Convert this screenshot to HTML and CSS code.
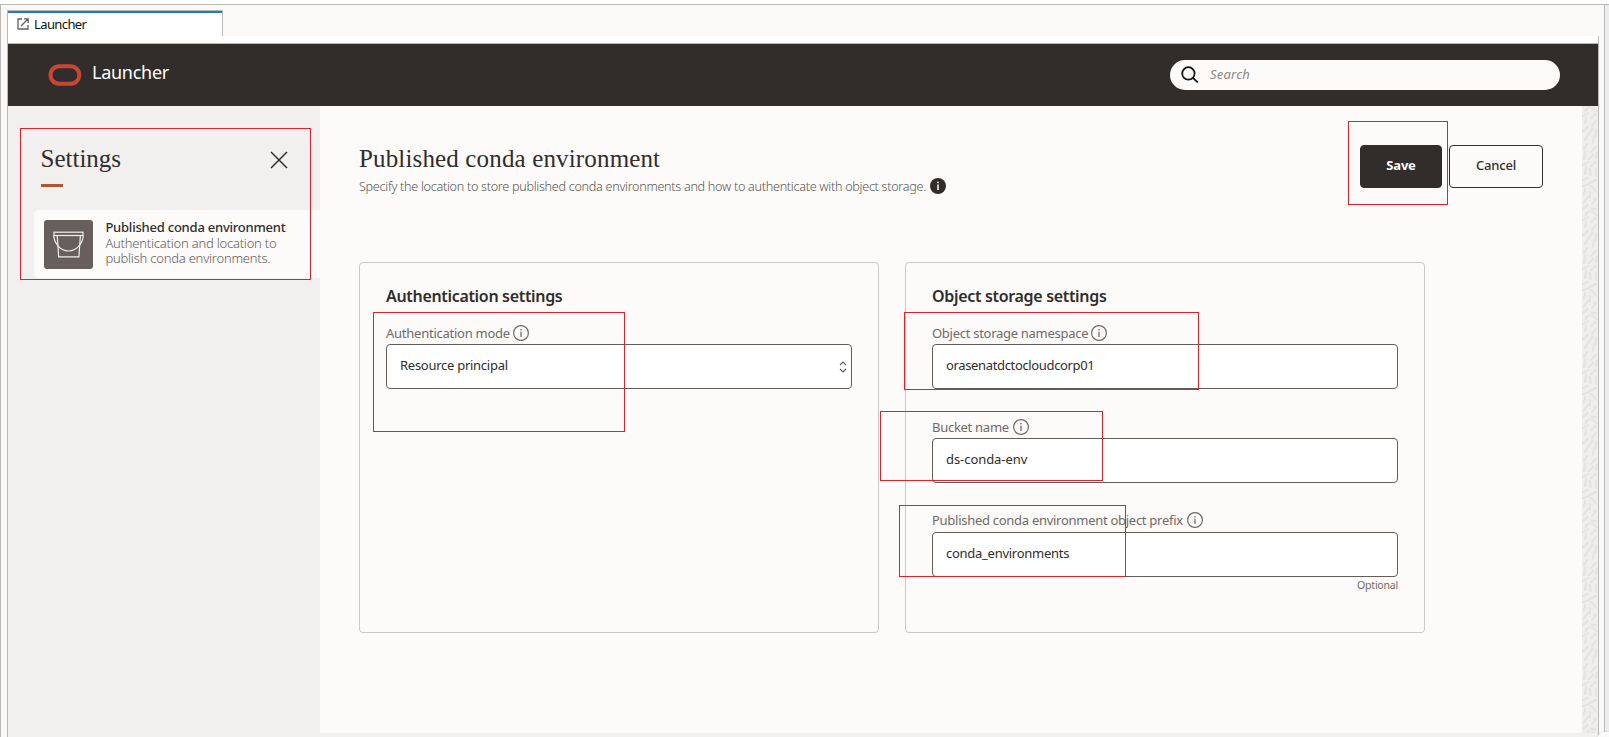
FILE: index.html
```html
<!DOCTYPE html>
<html lang="en">
<head>
<meta charset="utf-8">
<title>Launcher</title>
<link rel="stylesheet" href="styles.css">
</head>
<body>
<svg class="defs" width="0" height="0" aria-hidden="true">
  <symbol id="info" viewBox="0 0 16 16"><circle cx="8" cy="8" r="7.4" fill="none" stroke="currentColor" stroke-width="1.2"/><path d="M8 6.7V12M8 3.9v1.5" stroke="currentColor" stroke-width="1.3"/></symbol>
</svg>
<div class="workspace">
  <div class="tabs"><div class="tab">
    <svg width="12" height="12" viewBox="0 0 12 12" fill="none" stroke="#616161" stroke-width="1.3"><path d="M5 1H1v10h10V7M7 .8h4.2V5M11 1 4 8"/></svg>
    <span class="t-tab">Launcher</span></div></div>
  <div class="panel">
    <header class="header">
      <svg class="logo" width="34" height="22" viewBox="0 0 34 22"><rect x="2.5" y="2.2" width="28.8" height="17.6" rx="8.8" fill="none" stroke="#c74634" stroke-width="4"/></svg>
      <span class="brand t-brand">Launcher</span>
      <div class="search">
        <svg width="18" height="18" viewBox="0 0 18 18" fill="none" stroke="#111" stroke-width="1.8"><circle cx="7.4" cy="7.4" r="6.2"/><path d="m11.8 11.8 5 4.6"/></svg>
        <span class="t-search">Search</span>
      </div>
    </header>
    <div class="body">
      <aside class="sidebar">
        <div class="side-head"><h2 class="t-set">Settings</h2>
          <svg width="18" height="18" viewBox="0 0 18 18" stroke="#312d2a" stroke-width="1.5"><path d="m1 1 16 16M17 1 1 17"/></svg></div>
        <div class="accent"></div>
        <div class="item">
          <svg class="bucket" width="49" height="49" viewBox="0 0 49 49"><rect width="49" height="49" rx="3" fill="#665f5b"/><g fill="none" stroke="#f1efed" stroke-width="1.2"><rect x="10" y="12.2" width="29" height="3.3"/><path d="m13.2 15.5 1.5 21.3h20.2l1.5-21.3"/><path d="M9.7 15.5C10.5 24 16.5 31 24.5 31S38.5 24 39.3 15.5"/></g></svg>
          <div class="item-text"><b class="t-item">Published conda environment</b><span class="t-item-desc">Authentication and location to</span><span class="t-item-desc">publish conda environments.</span></div>
        </div>
      </aside>
      <main class="main">
        <div class="top">
          <div class="intro">
            <h1 class="t-title">Published conda environment</h1>
            <p class="desc"><span class="t-desc">Specify the location to store published conda environments and how to authenticate with object storage.</span><svg width="16" height="16" viewBox="0 0 16 16"><circle cx="8" cy="8" r="8" fill="#312d2a"/><path d="M8 6.5V12M8 3.7v1.6" stroke="#fff" stroke-width="1.5"/></svg></p>
          </div>
          <div class="actions"><button class="save">Save</button><button class="cancel">Cancel</button></div>
        </div>
        <div class="cards">
          <section class="card">
            <h3>Authentication settings</h3>
            <div class="label"><span class="t-mode">Authentication mode</span><svg width="16" height="16"><use href="#info"/></svg></div>
            <div class="field"><span class="t-value">Resource principal</span><svg width="8" height="12" viewBox="0 0 8 12" fill="none" stroke="#625d59" stroke-width="1.2"><path d="m1 4 3-3 3 3M1 8l3 3 3-3"/></svg></div>
          </section>
          <section class="card">
            <h3>Object storage settings</h3>
            <div class="label"><span>Object storage namespace</span><svg width="16" height="16"><use href="#info"/></svg></div>
            <div class="field"><span class="t-namespace">orasenatdctocloudcorp01</span></div>
            <div class="label wide"><span>Bucket name</span><svg width="16" height="16"><use href="#info"/></svg></div>
            <div class="field"><span class="t-bucket">ds-conda-env</span></div>
            <div class="label wide last"><span>Published conda environment object prefix</span><svg width="16" height="16"><use href="#info"/></svg></div>
            <div class="field"><span class="t-value">conda_environments</span></div>
            <div class="optional"><span>Optional</span></div>
          </section>
        </div>
      </main>
      <svg class="texture" width="16" height="627"><defs><pattern id="dashes" width="16" height="104" patternUnits="userSpaceOnUse"><rect width="16" height="104" fill="#efeeec"/><path d="m3 5 4-4M10 2l5 3M1 10l5-3M9 12l5-4M3 17l1-5M10 20l4-5M1 25l5-4M8 27l3-5M14 24v6M3 34l4-7M11 37l1-7M2 43l3-5M9 46l5-5M2 53l1-7M7 53l4-4M14 52l1-5M1 59l5-3M9 60l5-4M3 68l1-7M9 69l-1-6M14 70v-7M1 74l5-2M8 77l6-3M1 80l6-2M9 80l5 5M2 88l1-5M8 91v-5M2 96l4-5M10 98l4-6M1 103l5-4M9 103h5" stroke="#e4e3e1" stroke-width="2" stroke-linecap="round"/></pattern></defs><rect width="16" height="627" fill="url(#dashes)"/></svg>
    </div>
  </div>
  <div class="gutter"></div>
</div>
<div class="corner"></div>
<div class="mark mark-side"></div><div class="mark mark-auth"></div><div class="mark mark-ns"></div><div class="mark mark-bucket"></div><div class="mark mark-prefix"></div><div class="mark mark-save"></div>
</body>
</html>
```
FILE: styles.css
```css
* { box-sizing: border-box; margin: 0; padding: 0; }
body { width: 1609px; height: 737px; overflow: hidden; background: #fff; font: 13px/15px "Noto Sans", sans-serif; color: #312d2a; position: relative; }
.defs { position: absolute; }
svg { flex: none; display: block; }
span, b, h1, h2, h3 { white-space: nowrap; }
.workspace { margin-top: 4px; height: 733px; border-top: 1px solid #bbb9b7; border-left: 1px solid #bbb9b7; background: #faf9f7; padding-left: 6px; display: grid; grid-template-columns: 1592px 5px 5px; grid-template-rows: 31px 701px; }
.tabs { grid-column: 1 / 3; padding-top: 5px; }
.tab { width: 216px; height: 26px; border: 1px solid #bbb9b7; border-bottom: 0; background: #fff; box-shadow: inset 0 2px #1f78c8; display: flex; gap: 5px; padding: 7px 0 0 9px; color: #111; }
.t-tab { margin-top: -1px; letter-spacing: -.6px; }
.panel { grid-column: 1; border-left: 1px solid #bbb9b7; border-right: 1px solid #bbb9b7; background: #fff; padding-top: 7px; }
.gutter { grid-column: 3; grid-row: 1 / 3; background: #ededed; border-left: 1px solid #bbb9b7; }
.corner { position: absolute; left: 1597px; top: 732px; width: 24px; height: 16px; border-radius: 10px; background: #fafafa; box-shadow: 0 0 3px rgba(0, 0, 0, .12); }
.header { height: 63px; border-top: 1px solid #bbb9b7; background: #312d2a; display: flex; align-items: center; padding: 0 38px 0 40px; color: #fff; }
.brand { margin: -6px 0 0 10px; font-size: 18px; line-height: 24px; letter-spacing: -.26px; }
.search { margin-left: auto; width: 390px; height: 30px; background: #fcfbfa; border-radius: 15px; display: flex; align-items: center; gap: 11px; padding-left: 11px; color: #8b8785; font-style: italic; }
.t-search { margin-top: -2px; letter-spacing: .2px; }
.body { height: 631px; display: flex; background: #f1f0ee; }
.sidebar { width: 312px; padding-top: 36px; background: #f1f0ee; }
.side-head { display: flex; justify-content: space-between; padding: 0 32px 0 32.5px; height: 42px; }
.side-head svg { margin-top: 9px; }
h2, h1 { font-family: "Liberation Serif", serif; font-weight: 400; line-height: 34px; font-size: 25px; }
.t-title { letter-spacing: .15px; }
.accent { width: 22px; height: 3px; margin-left: 33px; background: #ae562c; }
.item { margin: 23px 0 0 26px; height: 68px; background: #fcfbfa; border-radius: 5px 0 0 5px; padding: 10px; display: flex; gap: 12.4px; }
.item-text { display: flex; flex-direction: column; color: #625d5a; font-weight: 300; letter-spacing: -.22px; }
.item-text b { color: #312d2a; font-weight: 500; margin-bottom: 1px; }
.main { width: 1262px; height: 627px; background: #fcfbfa; padding-left: 39px; padding-top: 36px; }
.top { display: flex; justify-content: space-between; height: 120px; }
.desc { display: flex; gap: 4px; margin-top: 2px; align-items: center; color: #5a5552; font-weight: 300; }
.t-desc { font-size: 12.6px; letter-spacing: -.285px; }
.actions { display: flex; gap: 7px; padding: 3px 39px 0 0; }
button { height: 43px; border: 1px solid #312d2a; border-radius: 4px; font: 500 13px/15px "Noto Sans", sans-serif; letter-spacing: -.2px; color: #312d2a; background: transparent; padding-bottom: 3px; }
.save { width: 82px; background: #312d2a; color: #fff; font-weight: 700; }
.cancel { width: 94px; }
.cards { display: flex; gap: 26px; }
.card { width: 520px; height: 371px; border: 1px solid #cbc9c7; border-radius: 4px; padding: 22px 26px; }
h3 { font-size: 16px; line-height: 22px; font-weight: 600; letter-spacing: -.32px; }
.label { display: flex; align-items: center; gap: 3px; height: 16px; margin: 18px 0 3px; color: #6f6a67; letter-spacing: -.28px; }
.label.wide { gap: 4px; }
.t-mode { letter-spacing: -.25px; }
.field { height: 45px; border: 1px solid #625d59; border-radius: 4px; background: #fff; display: flex; justify-content: space-between; align-items: center; padding: 0 4px 3px 13px; margin-bottom: 30px; }
.field svg { margin-top: 4px; }
.t-value { letter-spacing: -.27px; }
.t-namespace { letter-spacing: -.35px; }
.t-bucket { letter-spacing: -.06px; }
.optional { display: flex; justify-content: flex-end; font-size: 10.6px; letter-spacing: -.25px; color: #6f6a67; margin-top: -29px; }
.field + .label { margin-top: 0; }
.field + .label.last { margin: -1px 0 4px; }
.mark { position: absolute; border: 1px solid #ed1c24; }
.mark-side { left: 20px; top: 128px; width: 291px; height: 152px; }
.mark-auth { left: 373px; top: 312px; width: 252px; height: 120px; }
.mark-ns { left: 904px; top: 312px; width: 295px; height: 78px; }
.mark-bucket { left: 880px; top: 411px; width: 223px; height: 70px; }
.mark-prefix { left: 899px; top: 505px; width: 227px; height: 72px; }
.mark-save { left: 1348px; top: 121px; width: 100px; height: 84px; }
```
